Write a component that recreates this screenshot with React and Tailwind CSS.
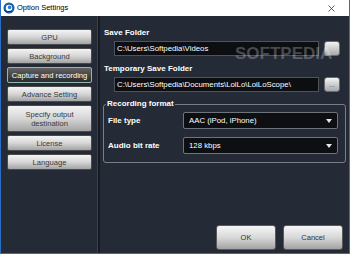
import React from "react";

const font = { fontFamily: '"Liberation Sans", Arial, sans-serif' };

function NavButton({ children, selected, tall }) {
  const base =
    "w-[85px] flex items-center justify-center text-center text-[7.6px] leading-[9px] rounded-[2px] border";
  const cls = selected
    ? " bg-gradient-to-b from-[#626262] to-[#2c2c2c] border-[#8fb7b7] text-white"
    : " bg-gradient-to-b from-[#f4f4f4] via-[#d6d6d6] to-[#a4a4a4] border-[#4a4a4a] text-[#3a3a3a]";
  return (
    <div className={base + cls + (tall ? " h-[27px]" : " h-[16px]")}>{children}</div>
  );
}

function Browse({ label }) {
  return (
    <div className="w-[16px] h-[15px] rounded-[3px] border border-[#6b6b6b] bg-gradient-to-b from-[#f4f4f4] to-[#a9a9a9] flex items-center justify-center text-[7px] leading-none text-[#555] shrink-0">
      {label}
    </div>
  );
}

function Select({ value }) {
  return (
    <div className="w-[155px] h-[17px] rounded-[2px] border border-[#6f747b] bg-[#0d0f13] flex items-center justify-between pl-[5px] pr-[5px] text-white text-[7.8px]">
      <span>{value}</span>
      <svg width="6" height="4" viewBox="0 0 6 4">
        <path d="M0 0 H6 L3 4 Z" fill="#e8e8e8" />
      </svg>
    </div>
  );
}

function PushButton({ children }) {
  return (
    <div className="w-[60px] h-[25px] rounded-[3px] border border-[#5a5a5a] bg-gradient-to-b from-[#f6f6f6] via-[#d8d8d8] to-[#a3a3a3] flex items-center justify-center text-[7.5px] text-[#333]">
      {children}
    </div>
  );
}

export default function App() {
  return (
    <div
      style={font}
      className="w-[350px] h-[254px] flex flex-col border-x border-b border-[#2b6fc4] overflow-hidden"
    >
      {/* title bar */}
      <div className="h-[16px] bg-white flex items-center justify-between pl-[2px] pr-[14px] shrink-0">
        <div className="flex items-center gap-[2px]">
          <svg width="12" height="12" viewBox="0 0 12 12">
            <circle cx="6" cy="6" r="5.5" fill="#1d5fa8" />
            <circle cx="6" cy="6" r="3.2" fill="#ffffff" />
            <circle cx="6.6" cy="5.4" r="1.8" fill="#2b7fd6" />
            <path d="M1 8 Q4 11 9 9" stroke="#0d2f5a" strokeWidth="1" fill="none" />
          </svg>
          <span className="text-[7.5px] text-black">Option Settings</span>
        </div>
        <svg width="7" height="7" viewBox="0 0 7 7">
          <path d="M0.5 0.5 L6.5 6.5 M6.5 0.5 L0.5 6.5" stroke="#333" strokeWidth="0.8" />
        </svg>
      </div>

      {/* body */}
      <div className="flex-1 flex bg-[#252b36]">
        {/* left nav */}
        <div className="w-[96px] flex flex-col gap-[3px] pt-[13px] pl-[6px]">
          <NavButton>GPU</NavButton>
          <NavButton>Background</NavButton>
          <NavButton selected>Capture and recording</NavButton>
          <NavButton>Advance Setting</NavButton>
          <NavButton tall>
            Specify output
            <br />
            destination
          </NavButton>
          <NavButton>License</NavButton>
          <NavButton>Language</NavButton>
        </div>
        {/* separator */}
        <div className="w-[3px] flex">
          <div className="w-[1px] bg-[#3a414d]" />
          <div className="w-[2px] bg-[#171b21]" />
        </div>

        {/* right pane */}
        <div className="flex-1 relative flex flex-col pl-[3px] pr-[3px]">
          <div className="text-white text-[8px] font-bold leading-[10px] mt-[12px] ml-[1px]">Save Folder</div>
          <div className="flex items-center gap-[5px] mt-[3px] ml-[11px]">
            <div className="w-[205px] h-[15px] bg-[#0c0e12] border border-[#4f545b] flex items-center pl-[2px] text-white text-[7.8px] whitespace-nowrap overflow-hidden">
              C:\Users\Softpedia\Videos
            </div>
            <Browse label="" />
          </div>
          <div className="text-white text-[8px] font-bold leading-[10px] mt-[8px] ml-[1px]">Temporary Save Folder</div>
          <div className="flex items-center gap-[5px] mt-[3px] ml-[11px]">
            <div className="w-[205px] h-[15px] bg-[#0c0e12] border border-[#4f545b] flex items-center pl-[2px] text-white text-[7.8px] whitespace-nowrap overflow-hidden">
              C:\Users\Softpedia\Documents\LoiLo\LoiLoScope\
            </div>
            <Browse label="..." />
          </div>

          <fieldset className="mt-[7px] w-[243px] h-[64px] border border-[#7a7f86] rounded-[3px] pl-[4px] pr-[7px]">
            <legend className="text-white text-[8px] font-bold leading-[10px] px-[1px] ml-[-2px]">
              Recording format
            </legend>
            <div className="flex items-center justify-between mt-[3px]">
              <span className="text-white text-[8px] font-bold">File type</span>
              <Select value="AAC  (iPod, iPhone)" />
            </div>
            <div className="flex items-center justify-between mt-[8px]">
              <span className="text-white text-[8px] font-bold">Audio bit rate</span>
              <Select value="128 kbps" />
            </div>
          </fieldset>

          <div className="flex-1" />
          <div className="flex justify-end gap-[7px] pr-[3px] mb-[3px]">
            <PushButton>OK</PushButton>
            <PushButton>Cancel</PushButton>
          </div>

          {/* watermark */}
          <div className="absolute left-[135px] top-[29px] text-[17px] leading-[18px] font-bold text-white/25 pointer-events-none">
            SOFTPEDIA
          </div>
        </div>
      </div>
    </div>
  );
}
